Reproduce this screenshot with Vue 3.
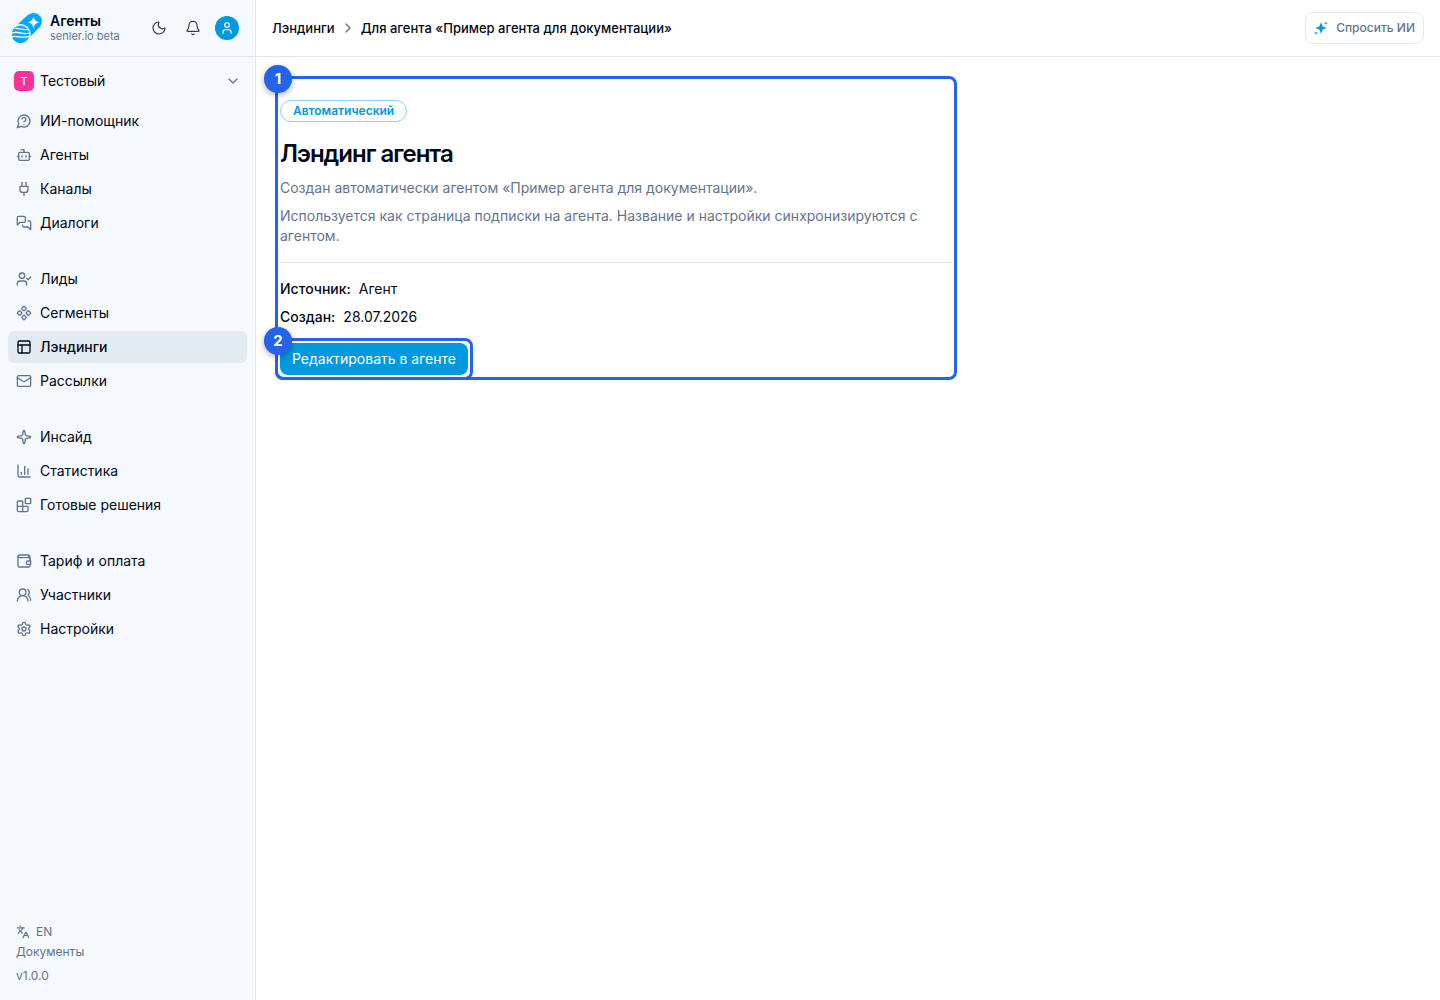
<script setup>
const groups = [
  [
    { label: 'ИИ-помощник', icon: ['M7.9 20A9 9 0 1 0 4 16.1L2 22Z', 'M9.09 9a3 3 0 0 1 5.83 1c0 2-3 3-3 3', 'M12 17h.01'] },
    { label: 'Агенты', icon: ['M12 8V4H8', 'M6 8h12a2 2 0 0 1 2 2v8a2 2 0 0 1-2 2H6a2 2 0 0 1-2-2v-8a2 2 0 0 1 2-2Z', 'M2 14h2', 'M20 14h2', 'M15 13v2', 'M9 13v2'] },
    { label: 'Каналы', icon: ['M12 22v-5', 'M9 8V2', 'M15 8V2', 'M18 8v5a4 4 0 0 1-4 4h-4a4 4 0 0 1-4-4V8Z'] },
    { label: 'Диалоги', icon: ['M14 9a2 2 0 0 1-2 2H6l-4 4V4a2 2 0 0 1 2-2h8a2 2 0 0 1 2 2z', 'M18 9h2a2 2 0 0 1 2 2v11l-4-4h-6a2 2 0 0 1-2-2v-1'] },
  ],
  [
    { label: 'Лиды', icon: ['M2 21v-2a4 4 0 0 1 4-4h6a4 4 0 0 1 4 4v2', 'M13 7a4 4 0 1 1-8 0a4 4 0 0 1 8 0', 'm16 11 2 2 4-4'] },
    { label: 'Сегменты', icon: ['M15.536 11.293a1 1 0 0 0 0 1.414l2.376 2.377a1 1 0 0 0 1.414 0l2.377-2.377a1 1 0 0 0 0-1.414l-2.377-2.377a1 1 0 0 0-1.414 0z', 'M2.297 11.293a1 1 0 0 0 0 1.414l2.377 2.377a1 1 0 0 0 1.414 0l2.377-2.377a1 1 0 0 0 0-1.414L6.088 8.916a1 1 0 0 0-1.414 0z', 'M8.916 17.912a1 1 0 0 0 0 1.415l2.377 2.376a1 1 0 0 0 1.414 0l2.377-2.376a1 1 0 0 0 0-1.415l-2.377-2.376a1 1 0 0 0-1.414 0z', 'M8.916 4.674a1 1 0 0 0 0 1.414l2.377 2.376a1 1 0 0 0 1.414 0l2.377-2.376a1 1 0 0 0 0-1.414l-2.377-2.377a1 1 0 0 0-1.414 0z'] },
    { label: 'Лэндинги', active: true, icon: ['M5 3h14a2 2 0 0 1 2 2v14a2 2 0 0 1-2 2H5a2 2 0 0 1-2-2V5a2 2 0 0 1 2-2Z', 'M3 9h18', 'M9 21V9'] },
    { label: 'Рассылки', icon: ['M4 4h16a2 2 0 0 1 2 2v12a2 2 0 0 1-2 2H4a2 2 0 0 1-2-2V6a2 2 0 0 1 2-2Z', 'm22 7-8.991 5.727a2 2 0 0 1-2.009 0L2 7'] },
  ],
  [
    { label: 'Инсайд', icon: ['M11.017 2.814a1 1 0 0 1 1.966 0l1.051 5.558a2 2 0 0 0 1.594 1.594l5.558 1.051a1 1 0 0 1 0 1.966l-5.558 1.051a2 2 0 0 0-1.594 1.594l-1.051 5.558a1 1 0 0 1-1.966 0l-1.051-5.558a2 2 0 0 0-1.594-1.594l-5.558-1.051a1 1 0 0 1 0-1.966l5.558-1.051a2 2 0 0 0 1.594-1.594z'] },
    { label: 'Статистика', icon: ['M3 3v16a2 2 0 0 0 2 2h16', 'M18 17V9', 'M13 17V5', 'M8 17v-3'] },
    { label: 'Готовые решения', icon: ['M10 22V7a1 1 0 0 0-1-1H4a2 2 0 0 0-2 2v12a2 2 0 0 0 2 2h12a2 2 0 0 0 2-2v-5a1 1 0 0 0-1-1H2', 'M15 2h6a1 1 0 0 1 1 1v6a1 1 0 0 1-1 1h-6a1 1 0 0 1-1-1V3a1 1 0 0 1 1-1Z'] },
  ],
  [
    { label: 'Тариф и оплата', icon: ['M21 9V6a2 2 0 0 0-2-2', 'M3 5v14a2 2 0 0 0 2 2h14a2 2 0 0 0 2-2v-2', 'M21 12V9a2 2 0 0 0-2-2H5a2 2 0 0 1 0-4h14v4', 'M22 12h-4a2 2 0 0 0 0 5h4z'] },
    { label: 'Участники', icon: ['M18 21a8 8 0 0 0-16 0', 'M15 8a5 5 0 1 1-10 0a5 5 0 0 1 10 0', 'M22 20c0-3.37-2-6.5-4-8a5 5 0 0 0-.45-8.3'] },
    { label: 'Настройки', icon: ['M9.671 4.136a2.34 2.34 0 0 1 4.659 0 2.34 2.34 0 0 0 3.319 1.915 2.34 2.34 0 0 1 2.33 4.033 2.34 2.34 0 0 0 0 3.831 2.34 2.34 0 0 1-2.33 4.033 2.34 2.34 0 0 0-3.319 1.915 2.34 2.34 0 0 1-4.659 0 2.34 2.34 0 0 0-3.32-1.915 2.34 2.34 0 0 1-2.33-4.033 2.34 2.34 0 0 0 0-3.831A2.34 2.34 0 0 1 6.35 6.051a2.34 2.34 0 0 0 3.319-1.915', 'M15 12a3 3 0 1 1-6 0a3 3 0 0 1 6 0'] },
  ],
]
</script>

<template>
  <div class="app">
    <aside class="sidebar">
      <header class="brand">
        <svg class="logo" viewBox="0 0 30 30" aria-hidden="true">
          <path fill="#00a8ff" fill-rule="evenodd" d="M6 11 15 2.800C19-.8 24-.8 27.200 2.200c3.600 3.300 3.600 8.500.3 12L18 24ZM21.500 3c-.6 4-2.200 5.600-6.200 6.200 4 .7 5.600 2.300 6.200 6.300.7-4 2.300-5.600 6.300-6.300-4-.6-5.600-2.200-6.300-6.200Z" />
          <circle cx="8.500" cy="21.300" r="10.300" fill="#f5f9fd" />
          <circle cx="8.500" cy="21.300" r="8.800" fill="#00a8ff" />
          <path fill="none" stroke="#f5f9fd" stroke-width="1.300" d="M3 15.500c4-1.200 6 2.200 14 .8M-1 20.800c6-4.500 10 1.600 19-.6M-1 24c6-2.200 11 2.400 19-1" />
        </svg>
        <div class="brand-text">
          <strong>Агенты</strong>
          <small>senler.io beta</small>
        </div>
        <div class="brand-actions">
          <button class="icon-button" type="button" aria-label="Тёмная тема">
            <svg class="icon" viewBox="0 0 24 24"><path d="M20.985 12.486a9 9 0 1 1-9.473-9.472c.405-.022.617.46.402.803a6 6 0 0 0 8.268 8.268c.344-.215.825-.004.803.401" /></svg>
          </button>
          <button class="icon-button" type="button" aria-label="Уведомления">
            <svg class="icon" viewBox="0 0 24 24"><path d="M10.268 21a2 2 0 0 0 3.464 0" /><path d="M3.262 15.326A1 1 0 0 0 4 17h16a1 1 0 0 0 .74-1.673C19.410 13.956 18 12.499 18 8A6 6 0 0 0 6 8c0 4.499-1.411 5.956-2.738 7.326" /></svg>
          </button>
          <button class="avatar" type="button" aria-label="Профиль">
            <svg class="icon small" viewBox="0 0 24 24"><circle cx="12" cy="7" r="4" /><path d="M19 21v-2a4 4 0 0 0-4-4H9a4 4 0 0 0-4 4v2" /></svg>
          </button>
        </div>
      </header>

      <button class="workspace" type="button">
        <span class="workspace-mark">Т</span>
        <span class="workspace-name">Тестовый</span>
        <svg class="icon" viewBox="0 0 24 24"><path d="m6 9 6 6 6-6" /></svg>
      </button>

      <nav class="nav">
        <ul v-for="(group, i) in groups" :key="i">
          <li v-for="item in group" :key="item.label">
            <a href="#" :class="{ active: item.active }">
              <svg class="icon" viewBox="0 0 24 24"><path v-for="d in item.icon" :key="d" :d="d" /></svg>
              {{ item.label }}
            </a>
          </li>
        </ul>
      </nav>

      <footer class="sidebar-footer">
        <button class="language" type="button">
          <svg class="icon small" viewBox="0 0 24 24"><path d="m5 8 6 6" /><path d="m4 14 6-6 2-3" /><path d="M2 5h12" /><path d="M7 2h1" /><path d="m22 22-5-10-5 10" /><path d="M14 18h6" /></svg>
          EN
        </button>
        <a href="#">Документы</a>
        <span class="version">v1.0.0</span>
      </footer>
    </aside>

    <div class="page">
      <header class="topbar">
        <nav class="crumbs">
          <a href="#">Лэндинги</a>
          <svg class="icon" viewBox="0 0 24 24"><path d="m9 18 6-6-6-6" /></svg>
          <span>Для агента «Пример агента для документации»</span>
        </nav>
        <button class="ask" type="button">
          <svg viewBox="0 0 24 24" aria-hidden="true">
            <path d="M12 2 14.300 8.200Q14.800 9.200 15.800 9.700L22 12l-6.200 2.300q-1 .5-1.500 1.500L12 22l-2.300-6.200q-.5-1-1.500-1.500L2 12l6.200-2.300q1-.5 1.500-1.500ZM20.500.5l.9 2.300 2.300.9-2.300.9-.9 2.300-.9-2.300-2.300-.9 2.300-.9ZM3.500 17.500l.9 2.300 2.300.9-2.300.9-.9 2.300-.9-2.300-2.300-.9 2.300-.9Z" />
          </svg>
          Спросить ИИ
        </button>
      </header>

      <main class="content">
        <section class="landing">
          <span class="tag">Автоматический</span>
          <h1>Лэндинг агента</h1>
          <p>Создан автоматически агентом «Пример агента для документации».</p>
          <p>Используется как страница подписки на агента. Название и настройки синхронизируются с агентом.</p>
          <hr>
          <dl>
            <div><dt>Источник:</dt><dd>Агент</dd></div>
            <div><dt>Создан:</dt><dd>28.07.2026</dd></div>
          </dl>
          <div class="marker"><span>1</span></div>
          <div class="action">
            <button class="primary" type="button">Редактировать в агенте</button>
            <div class="marker"><span>2</span></div>
          </div>
        </section>
      </main>
    </div>
  </div>
</template>

<style>
body {
  margin: 0;
}
</style>

<style scoped>
.app {
  display: flex;
  min-height: 100vh;
  background: #fff;
  color: #020817;
  font-family: Inter, sans-serif;
  font-size: 14px;
  line-height: 20px;
}

.app * {
  box-sizing: border-box;
}

button {
  padding: 0;
  border: 0;
  background: none;
  color: inherit;
  font: inherit;
  cursor: pointer;
}

a {
  color: inherit;
  text-decoration: none;
}

.icon {
  flex: none;
  width: 16px;
  height: 16px;
  fill: none;
  stroke: currentColor;
  stroke-width: 2;
  stroke-linecap: round;
  stroke-linejoin: round;
}

.icon.small {
  width: 14px;
  height: 14px;
}

.sidebar {
  display: flex;
  flex: none;
  flex-direction: column;
  width: 256px;
  border-right: 1px solid #e2e8f0;
  background: #f5f9fd;
}

.brand {
  display: flex;
  align-items: center;
  gap: 8px;
  height: 57px;
  padding: 0 16px 0 12px;
  border-bottom: 1px solid #e2e8f0;
}

.logo {
  flex: none;
  width: 30px;
  height: 30px;
}

.brand-text {
  display: flex;
  flex: 1;
  flex-direction: column;
}

.brand-text strong {
  font-weight: 600;
  line-height: 16px;
}

.brand-text small {
  color: #64748b;
  font-size: 11px;
  line-height: 14px;
}

.brand-actions {
  display: flex;
  align-items: center;
  gap: 2px;
}

.icon-button {
  display: grid;
  place-items: center;
  width: 32px;
  height: 32px;
  color: #3b3f4b;
}

.icon-button .icon {
  stroke-width: 1.8;
}

.avatar {
  display: grid;
  place-items: center;
  width: 24px;
  height: 24px;
  margin-left: 4px;
  border-radius: 50%;
  background: #0099e0;
  color: #fff;
}

.workspace {
  display: flex;
  align-items: center;
  gap: 6px;
  height: 32px;
  margin: 8px;
  padding: 0 6px;
  text-align: left;
}

.workspace-mark {
  width: 20px;
  border-radius: 5px;
  background: #f6339a;
  color: #fff;
  font-size: 10px;
  font-weight: 600;
  text-align: center;
}

.workspace-name {
  flex: 1;
}

.workspace .icon {
  color: #64748b;
}

.nav {
  display: flex;
  flex-direction: column;
  gap: 24px;
  padding: 0 8px;
}

.nav ul {
  display: flex;
  flex-direction: column;
  gap: 2px;
  margin: 0;
  padding: 0;
  list-style: none;
}

.nav a {
  display: flex;
  align-items: center;
  gap: 8px;
  height: 32px;
  padding: 0 8px;
  border-radius: 6px;
}

.nav .icon {
  color: #64748b;
}

.nav a.active {
  background: #e2eaf2;
  font-weight: 500;
}

.nav a.active .icon {
  color: #020817;
}

.sidebar-footer {
  display: flex;
  flex-direction: column;
  align-items: flex-start;
  margin-top: auto;
  padding: 16px;
  color: #64748b;
  font-size: 12px;
  line-height: 20px;
}

.language {
  display: flex;
  align-items: center;
  gap: 6px;
}

.version {
  margin-top: 6px;
  line-height: 16px;
}

.page {
  flex: 1;
  min-width: 0;
}

.topbar {
  display: flex;
  align-items: center;
  justify-content: space-between;
  height: 57px;
  padding: 0 16px;
  border-bottom: 1px solid #e2e8f0;
}

.crumbs {
  display: flex;
  align-items: center;
  gap: 5px;
  font-size: 13px;
  font-weight: 500;
}

.crumbs .icon {
  color: #64748b;
}

.ask {
  display: flex;
  align-items: center;
  gap: 8px;
  height: 32px;
  padding: 0 8px;
  border: 1px solid #e2e8f0;
  border-radius: 8px;
  color: #64748b;
  font-size: 12px;
  font-weight: 500;
}

.ask svg {
  width: 14px;
  height: 14px;
  fill: #0099e0;
}

.content {
  padding: 24px;
}

.landing {
  position: relative;
  max-width: 672px;
  padding-top: 19px;
}

.tag {
  display: block;
  width: fit-content;
  padding: 0 12px;
  border: 1px solid #8dd2f2;
  border-radius: 11px;
  color: #0099e0;
  font-size: 12px;
  font-weight: 600;
}

h1 {
  margin: 16px 0 8px;
  font-size: 24px;
  font-weight: 600;
  letter-spacing: -1px;
  line-height: 32px;
}

p {
  margin: 0 0 8px;
  color: #64748b;
}

hr {
  margin: 16px 0;
  border: 0;
  border-top: 1px solid #e2e8f0;
}

dl {
  display: flex;
  flex-direction: column;
  gap: 8px;
  margin: 0 0 16px;
}

dl div {
  display: flex;
  gap: 8px;
}

dt {
  font-weight: 500;
}

dd {
  margin: 0;
}

.action {
  position: relative;
  width: fit-content;
}

.primary {
  display: block;
  height: 32px;
  padding: 0 12px;
  border-radius: 8px;
  background: #0099e0;
  color: #fff;
}

.marker {
  position: absolute;
  inset: -5px;
  border: 3px solid #2563eb;
  border-radius: 8px;
  pointer-events: none;
}

.marker span {
  position: absolute;
  top: -14px;
  left: -14px;
  width: 28px;
  border-radius: 50%;
  background: #2563eb;
  box-shadow: 0 2px 6px rgb(0 0 0 / 30%);
  color: #fff;
  font-size: 15px;
  font-weight: 700;
  line-height: 28px;
  text-align: center;
}
</style>
